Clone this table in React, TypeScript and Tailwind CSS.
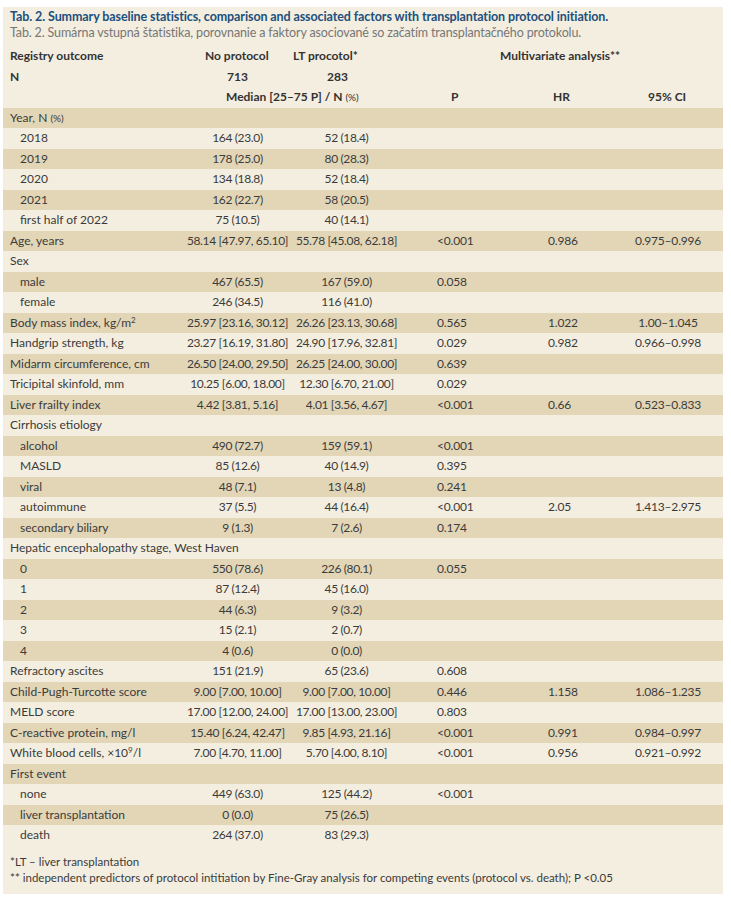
import React from 'react'

type Row = {
  label: React.ReactNode
  indent?: boolean
  np?: string
  lt?: string
  p?: string
  hr?: string
  ci?: string
}

const rows: Row[] = [
  { label: <>Year, N <span className="text-[10px]">(%)</span></> },
  { label: '2018', indent: true, np: '164 (23.0)', lt: '52 (18.4)' },
  { label: '2019', indent: true, np: '178 (25.0)', lt: '80 (28.3)' },
  { label: '2020', indent: true, np: '134 (18.8)', lt: '52 (18.4)' },
  { label: '2021', indent: true, np: '162 (22.7)', lt: '58 (20.5)' },
  { label: 'first half of 2022', indent: true, np: '75 (10.5)', lt: '40 (14.1)' },
  { label: 'Age, years', np: '58.14 [47.97, 65.10]', lt: '55.78 [45.08, 62.18]', p: '<0.001', hr: '0.986', ci: '0.975–0.996' },
  { label: 'Sex' },
  { label: 'male', indent: true, np: '467 (65.5)', lt: '167 (59.0)', p: '0.058' },
  { label: 'female', indent: true, np: '246 (34.5)', lt: '116 (41.0)' },
  { label: <>Body mass index, kg/m<sup className="text-[8px]">2</sup></>, np: '25.97 [23.16, 30.12]', lt: '26.26 [23.13, 30.68]', p: '0.565', hr: '1.022', ci: '1.00–1.045' },
  { label: 'Handgrip strength, kg', np: '23.27 [16.19, 31.80]', lt: '24.90 [17.96, 32.81]', p: '0.029', hr: '0.982', ci: '0.966–0.998' },
  { label: 'Midarm circumference, cm', np: '26.50 [24.00, 29.50]', lt: '26.25 [24.00, 30.00]', p: '0.639' },
  { label: 'Tricipital skinfold, mm', np: '10.25 [6.00, 18.00]', lt: '12.30 [6.70, 21.00]', p: '0.029' },
  { label: 'Liver frailty index', np: '4.42 [3.81, 5.16]', lt: '4.01 [3.56, 4.67]', p: '<0.001', hr: '0.66', ci: '0.523–0.833' },
  { label: 'Cirrhosis etiology' },
  { label: 'alcohol', indent: true, np: '490 (72.7)', lt: '159 (59.1)', p: '<0.001' },
  { label: 'MASLD', indent: true, np: '85 (12.6)', lt: '40 (14.9)', p: '0.395' },
  { label: 'viral', indent: true, np: '48 (7.1)', lt: '13 (4.8)', p: '0.241' },
  { label: 'autoimmune', indent: true, np: '37 (5.5)', lt: '44 (16.4)', p: '<0.001', hr: '2.05', ci: '1.413–2.975' },
  { label: 'secondary biliary', indent: true, np: '9 (1.3)', lt: '7 (2.6)', p: '0.174' },
  { label: 'Hepatic encephalopathy stage, West Haven' },
  { label: '0', indent: true, np: '550 (78.6)', lt: '226 (80.1)', p: '0.055' },
  { label: '1', indent: true, np: '87 (12.4)', lt: '45 (16.0)' },
  { label: '2', indent: true, np: '44 (6.3)', lt: '9 (3.2)' },
  { label: '3', indent: true, np: '15 (2.1)', lt: '2 (0.7)' },
  { label: '4', indent: true, np: '4 (0.6)', lt: '0 (0.0)' },
  { label: 'Refractory ascites', np: '151 (21.9)', lt: '65 (23.6)', p: '0.608' },
  { label: 'Child-Pugh-Turcotte score', np: '9.00 [7.00, 10.00]', lt: '9.00 [7.00, 10.00]', p: '0.446', hr: '1.158', ci: '1.086–1.235' },
  { label: 'MELD score', np: '17.00 [12.00, 24.00]', lt: '17.00 [13.00, 23.00]', p: '0.803' },
  { label: 'C-reactive protein, mg/l', np: '15.40 [6.24, 42.47]', lt: '9.85 [4.93, 21.16]', p: '<0.001', hr: '0.991', ci: '0.984–0.997' },
  { label: <>White blood cells, ×10<sup className="text-[8px]">9</sup>/l</>, np: '7.00 [4.70, 11.00]', lt: '5.70 [4.00, 8.10]', p: '<0.001', hr: '0.956', ci: '0.921–0.992' },
  { label: 'First event' },
  { label: 'none', indent: true, np: '449 (63.0)', lt: '125 (44.2)', p: '<0.001' },
  { label: 'liver transplantation', indent: true, np: '0 (0.0)', lt: '75 (26.5)' },
  { label: 'death', indent: true, np: '264 (37.0)', lt: '83 (29.3)' },
]

const grid = 'grid grid-cols-[183px_103px_115px_111px_98px_110px] items-center h-[20.5px] whitespace-nowrap'

export default function App() {
  return (
    <div className="min-h-screen bg-white pt-[7px] pl-[3px] font-['Lato',sans-serif] text-[#3b3b3b]">
      <div className="w-[720px] bg-[#f3eee0] pt-[2px] pb-2">
        <div className="pl-[7px] leading-4">
          <div className="text-[12.5px] font-bold tracking-[-0.1px] text-[#21507d]">
            Tab. 2. Summary baseline statistics, comparison and associated factors with transplantation protocol initiation.
          </div>
          <div className="text-[12.5px] tracking-[-0.14px] text-[#777]">
            Tab. 2. Sumárna vstupná štatistika, porovnanie a faktory asociované so začatím transplantačného protokolu.
          </div>
        </div>

        <div className="mt-[5px] text-[12px] font-bold text-[#333]">
          <div className={grid}>
            <div className="pl-[7px]">Registry outcome</div>
            <div className="pl-[19px]">No protocol</div>
            <div className="pl-[4px]">LT procotol*</div>
            <div className="col-span-3 pl-[96px]">Multivariate analysis**</div>
          </div>
          <div className={grid}>
            <div className="pl-[7px]">N</div>
            <div className="pl-[41px]">713</div>
            <div className="pl-[38px]">283</div>
            <div className="col-span-3" />
          </div>
          <div className={grid}>
            <div />
            <div className="col-span-2 pl-[40px]">
              Median [25–75 P] / N <span className="text-[10px] font-normal">(%)</span>
            </div>
            <div className="pl-[47px]">P</div>
            <div className="pl-[38px]">HR</div>
            <div className="pl-[35px]">95% CI</div>
          </div>
        </div>

        <div className="text-[12px]">
          {rows.map((r, i) => (
            <div key={i} className={`${grid} ${i % 2 === 0 ? 'bg-[#e2d6b7]' : ''}`}>
              <div className={r.indent ? 'pl-[17px]' : 'pl-[7px]'}>{r.label}</div>
              <div className="text-center tracking-[-0.35px]">{r.np}</div>
              <div className="text-center tracking-[-0.35px]">{r.lt}</div>
              <div className="pl-[33px] tracking-[-0.2px]">{r.p}</div>
              <div className="pl-[33px] tracking-[-0.2px]">{r.hr}</div>
              <div className="text-center tracking-[-0.2px]">{r.ci}</div>
            </div>
          ))}
        </div>

        <div className="pt-2 pl-[7px] text-[11.5px] leading-4">
          <div>*LT – liver transplantation</div>
          <div>** independent predictors of protocol intitiation by Fine-Gray analysis for competing events (protocol vs. death); P &lt;0.05</div>
        </div>
      </div>
    </div>
  )
}
